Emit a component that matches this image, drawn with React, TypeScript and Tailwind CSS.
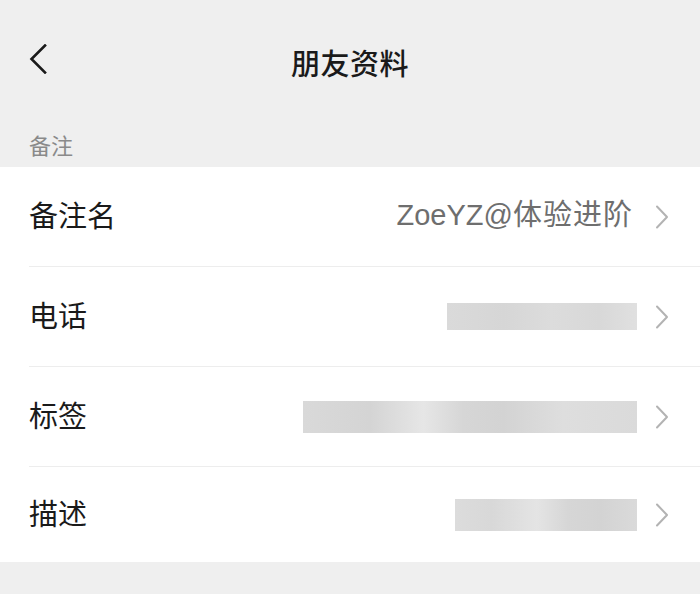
import React from "react";

const Chevron = () => (
  <svg width="14" height="24" viewBox="0 0 14 24" className="shrink-0">
    <path d="M2 1.5 L12 12 L2 22.5" fill="none" stroke="#b3b3b3" strokeWidth="2" strokeLinecap="round" strokeLinejoin="round" />
  </svg>
);

type Row = { label: string; value?: boolean; bar?: { w: number; h: number; bg: string }; last?: boolean };

const rows: Row[] = [
  { label: "备注名", value: true },
  { label: "电话", bar: { w: 190, h: 27, bg: "linear-gradient(90deg,#dadada 0%,#d6d6d6 30%,#dcdcdc 55%,#d8d8d8 80%,#e0e0e0 100%)" } },
  { label: "标签", bar: { w: 334, h: 32, bg: "linear-gradient(90deg,#d9d9d9 0%,#d4d4d4 20%,#e6e6e6 36%,#d6d6d6 48%,#d3d3d3 60%,#dedede 78%,#dadada 100%)" } },
  { label: "描述", bar: { w: 182, h: 32, bg: "linear-gradient(90deg,#dcdcdc 0%,#d8d8d8 20%,#e4e4e4 45%,#d6d6d6 62%,#d3d3d3 80%,#dadada 100%)" }, last: true },
];

export default function App() {
  return (
    <div
      className="w-[700px] h-[594px] bg-[#efefef] overflow-hidden"
      style={{ fontFamily: '"Noto Sans CJK SC", "Noto Sans", sans-serif' }}
    >
      <div className="relative h-[124px] flex items-center justify-center">
        <svg width="18" height="30" viewBox="0 0 18 30" className="absolute left-[29px] top-[44px]">
          <path d="M16 1.5 L2.5 15 L16 28.5" fill="none" stroke="#1a1a1a" strokeWidth="2.6" strokeLinecap="square" strokeLinejoin="miter" />
        </svg>
        <div className="text-[29px] leading-[30px] font-medium text-[#1a1a1a] tracking-[0.5px]">朋友资料</div>
      </div>
      <div className="h-[43px] pl-[29px] pt-[8px] text-[22px] leading-[24px] text-[#8a8a8a]">备注</div>
      <div className="bg-white pl-[29px]">
        {rows.map((r) => (
          <div
            key={r.label}
            className={`flex items-center pr-[31px] ${r.last ? "h-[95px]" : "h-[100px] border-b border-[#ededed]"}`}
          >
            <div className="mb-[6px] text-[29px] leading-[30px] text-[#1a1a1a]">{r.label}</div>
            <div className="flex-1 flex items-center justify-end gap-[18px]">
              {r.value && (
                <div className="mr-[4px] mb-[6px] text-[29px] leading-[30px] text-[#6e6e6e] whitespace-nowrap">
                  <span style={{ fontFamily: '"Liberation Sans", Arial, sans-serif' }}>ZoeYZ@</span>
                  <span className="tracking-[1px]">体验进阶</span>
                </div>
              )}
              {r.bar && (
                <div
                  className="blur-[0.6px]"
                  style={{ width: r.bar.w, height: r.bar.h, background: r.bar.bg }}
                />
              )}
              <Chevron />
            </div>
          </div>
        ))}
      </div>
    </div>
  );
}
